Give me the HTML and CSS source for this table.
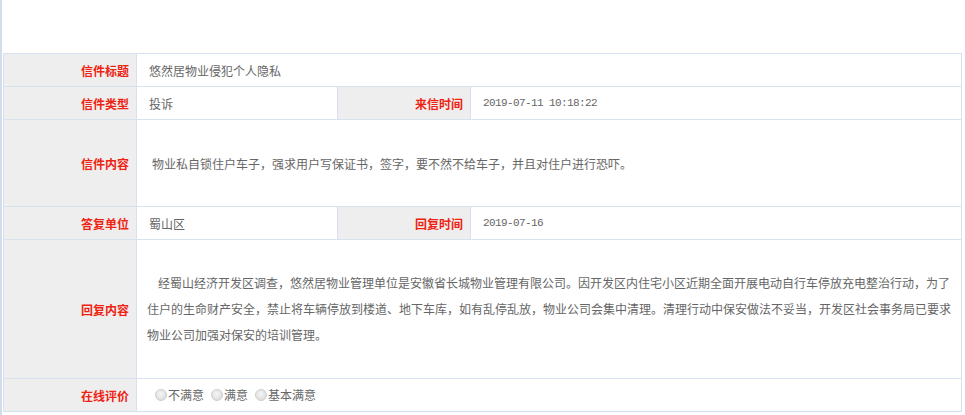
FILE: index.html
```html
<!DOCTYPE html>
<html lang="zh-CN">
<head>
<meta charset="utf-8">
<title>信件详情</title>
<link rel="stylesheet" href="styles.css">
</head>
<body>
<div class="page">
  <div class="top-space"></div>
  <table class="letter">
    <colgroup>
      <col class="c-label">
      <col class="c-value">
      <col class="c-label">
      <col class="c-value2">
    </colgroup>
    <tr class="r-short">
      <th>信件标题</th>
      <td colspan="3">悠然居物业侵犯个人隐私</td>
    </tr>
    <tr class="r-short">
      <th>信件类型</th>
      <td>投诉</td>
      <th>来信时间</th>
      <td class="mono">2019-07-11 10:18:22</td>
    </tr>
    <tr class="r-content">
      <th>信件内容</th>
      <td colspan="3" class="indent-small">物业私自锁住户车子，强求用户写保证书，签字，要不然不给车子，并且对住户进行恐吓。</td>
    </tr>
    <tr class="r-short">
      <th>答复单位</th>
      <td>蜀山区</td>
      <th>回复时间</th>
      <td class="mono">2019-07-16</td>
    </tr>
    <tr class="r-reply">
      <th>回复内容</th>
      <td colspan="3" class="reply"><p>经蜀山经济开发区调查，悠然居物业管理单位是安徽省长城物业管理有限公司。因开发区内住宅小区近期全面开展电动自行车停放充电整治行动，为了住户的生命财产安全，禁止将车辆停放到楼道、地下车库，如有乱停乱放，物业公司会集中清理。清理行动中保安做法不妥当，开发区社会事务局已要求物业公司加强对保安的培训管理。</p></td>
    </tr>
    <tr class="r-short">
      <th>在线评价</th>
      <td colspan="3" class="rating"><span class="opt"><span class="radio"></span>不满意</span><span class="opt"><span class="radio"></span>满意</span><span class="opt"><span class="radio"></span>基本满意</span></td>
    </tr>
  </table>
</div>
</body>
</html>
```
FILE: styles.css
```css
html, body {
  margin: 0;
  padding: 0;
  background: #ffffff;
}
body {
  font-family: "Noto Sans CJK SC", "Noto Sans", sans-serif;
  font-size: 12px;
  color: #666666;
}
.page {
  width: 962px;
  min-height: 415px;
  border-left: 2px solid #d3dce9;
  padding-left: 1px;
  box-sizing: border-box;
}
.top-space {
  height: 53px;
}
.letter {
  border-collapse: collapse;
  table-layout: fixed;
  width: 959px;
}
.c-label { width: 133px; }
.c-value { width: 201px; }
.c-value2 { width: 491px; }
.letter th,
.letter td {
  border: 1px solid #d8e1ef;
  padding: 0 12px;
  vertical-align: middle;
}
.letter th {
  background: #eeeeee;
  color: #ee2211;
  font-weight: bold;
  font-size: 12px;
  text-align: right;
  padding-right: 7px;
}
.letter td {
  background: #ffffff;
  color: #666666;
  text-align: left;
}
.r-short { height: 33px; }
.r-content { height: 87px; }
.r-reply { height: 139px; }
.mono {
  font-family: "Liberation Mono", monospace;
  font-size: 11px;
  letter-spacing: -0.6px;
  color: #555555;
}
.indent-small {
  text-indent: 3px;
}
.letter td.reply {
  padding: 0 0 0 10px;
}
.reply p {
  margin: 0;
  text-indent: 11px;
  line-height: 26px;
}
.letter td.rating {
  padding-left: 18px;
  color: #666666;
}
.opt {
  display: inline-flex;
  align-items: center;
  margin-right: 7px;
}
.radio {
  display: inline-block;
  width: 10px;
  height: 10px;
  border-radius: 50%;
  border: 1px solid #d0d0d0;
  background: radial-gradient(circle at 45% 40%, #f6f6f6 0%, #e2e2e2 60%, #d2d2d2 100%);
  margin-right: 1px;
}
```
